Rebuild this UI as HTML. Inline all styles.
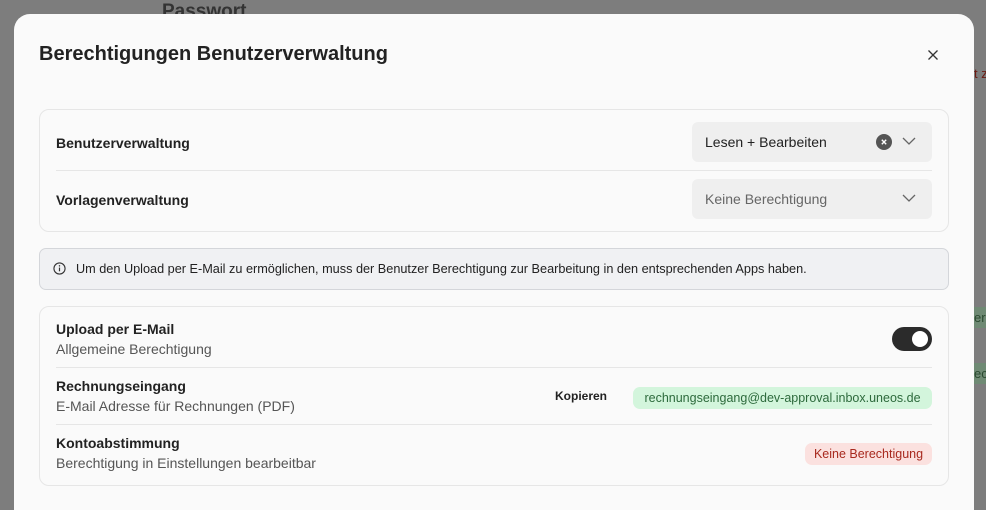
<!DOCTYPE html>
<html style="width:986px;height:510px;overflow:hidden"><head><meta charset="utf-8"><style>
*{box-sizing:border-box;margin:0;padding:0}
body{width:986px;height:510px;overflow:hidden;background:#7d7d7d;font-family:"Liberation Sans",sans-serif;position:relative}
.a{position:absolute}
.modal{left:14px;top:14px;width:960px;height:520px;background:#fafafa;border-radius:16px}
.card{position:absolute;left:25px;width:910px;border:1px solid #e6e6e6;border-radius:10px;background:#fafafa}
.lbl{position:absolute;left:16px;font-size:14px;font-weight:bold;color:#222}
.sub{position:absolute;left:16px;font-size:14px;color:#555}
.sep{position:absolute;left:16px;right:16px;height:1px;background:#e6e6e6}
.sel{position:absolute;left:652px;width:240px;height:40px;background:#efefef;border-radius:6px;font-size:14px}
.sel span{position:absolute;left:13px;top:12px}
.chev{position:absolute;right:16px;top:14px}
</style></head><body>
<div class="a" style="left:162px;top:2px;font-size:19px;font-weight:bold;color:#333;line-height:20px">Passwort</div>
<div class="a" style="left:974px;top:66px;font-size:13px;color:#6b1a12;white-space:nowrap">t z</div>
<div class="a" style="left:974px;top:307px;width:12px;height:21px;background:#6f8a74;color:#2b4a30;font-size:13px;line-height:21px;overflow:hidden;white-space:nowrap">ere</div>
<div class="a" style="left:974px;top:363px;width:12px;height:21px;background:#6f8a74;color:#2b4a30;font-size:13px;line-height:21px;overflow:hidden;white-space:nowrap">ech</div>
<div class="a modal">
 <div class="a" style="left:25px;top:29px;font-size:20px;font-weight:bold;color:#222">Berechtigungen Benutzerverwaltung</div>
 <svg class="a" style="left:913px;top:35px" width="12" height="12" viewBox="0 0 12 12"><path d="M1.5 1.5L10.5 10.5M10.5 1.5L1.5 10.5" stroke="#333" stroke-width="1.3"/></svg>
 <div class="card" style="top:95px;height:123px">
  <div class="lbl" style="top:25px">Benutzerverwaltung</div>
  <div class="sel" style="top:12px"><span style="color:#222">Lesen + Bearbeiten</span>
   <svg class="a" style="left:184px;top:12px" width="16" height="16" viewBox="0 0 16 16"><circle cx="8" cy="8" r="8" fill="#555"/><path d="M5.8 5.8L10.2 10.2M10.2 5.8L5.8 10.2" stroke="#fff" stroke-width="1.4"/></svg>
   <svg class="chev" width="14" height="10" viewBox="0 0 14 10"><path d="M1 2L7 8L13 2" stroke="#666" stroke-width="1.3" fill="none"/></svg></div>
  <div class="sep" style="top:60px"></div>
  <div class="lbl" style="top:82px">Vorlagenverwaltung</div>
  <div class="sel" style="top:69px"><span style="color:#666">Keine Berechtigung</span>
   <svg class="chev" width="14" height="10" viewBox="0 0 14 10"><path d="M1 2L7 8L13 2" stroke="#666" stroke-width="1.3" fill="none"/></svg></div>
 </div>
 <div class="a" style="left:25px;top:234px;width:910px;height:42px;background:#f0f1f3;border:1px solid #d4d6da;border-radius:7px">
  <svg class="a" style="left:13px;top:13px" width="13" height="13" viewBox="0 0 14 14"><circle cx="7" cy="7" r="6" fill="none" stroke="#333" stroke-width="1.2"/><path d="M7 6v4" stroke="#333" stroke-width="1.3"/><circle cx="7" cy="4.2" r=".8" fill="#333"/></svg>
  <div class="a" style="left:36px;top:13px;font-size:12.7px;color:#222;white-space:nowrap">Um den Upload per E-Mail zu ermöglichen, muss der Benutzer Berechtigung zur Bearbeitung in den entsprechenden Apps haben.</div>
 </div>
 <div class="card" style="top:292px;height:180px">
  <div class="lbl" style="top:14px">Upload per E-Mail</div>
  <div class="sub" style="top:34px">Allgemeine Berechtigung</div>
  <div class="a" style="left:852px;top:20px;width:40px;height:24px;border-radius:12px;background:#2b2b2b"><div class="a" style="left:20px;top:4px;width:16px;height:16px;border-radius:50%;background:#fff"></div></div>
  <div class="sep" style="top:60px"></div>
  <div class="lbl" style="top:71px">Rechnungseingang</div>
  <div class="sub" style="top:91px">E-Mail Adresse für Rechnungen (PDF)</div>
  <div class="a" style="left:515px;top:82px;font-size:12px;font-weight:bold;color:#222">Kopieren</div>
  <div class="a" style="left:593px;top:80px;width:299px;height:22px;border-radius:7px;background:#d3f5dc;color:#2d6a3c;font-size:12.5px;line-height:22px;text-align:center">rechnungseingang@dev-approval.inbox.uneos.de</div>
  <div class="sep" style="top:117px"></div>
  <div class="lbl" style="top:128px">Kontoabstimmung</div>
  <div class="sub" style="top:148px">Berechtigung in Einstellungen bearbeitbar</div>
  <div class="a" style="left:765px;top:136px;width:127px;height:22px;border-radius:7px;background:#fbe1df;color:#a8291e;font-size:12.5px;line-height:22px;text-align:center">Keine Berechtigung</div>
 </div>
</div>
</body></html>
